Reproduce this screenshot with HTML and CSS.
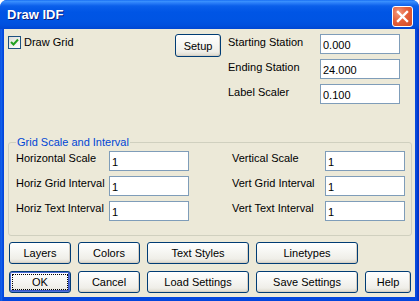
FILE: index.html
```
<!DOCTYPE html>
<html>
<head>
<meta charset="utf-8">
<link rel="stylesheet" href="styles.css">
</head>
<body>
<div class="window">
  <div class="titlebar">
    <span class="title">Draw IDF</span>
    <div class="close">
      <svg width="13" height="13" viewBox="0 0 13 13"><path d="M2 2 L11 11 M11 2 L2 11" stroke="#fff" stroke-width="2.4" stroke-linecap="square"/></svg>
    </div>
  </div>
  <div class="client">
    <div class="top">
      <div class="check-area">
        <span class="checkbox">
          <svg width="11" height="11" viewBox="0 0 11 11"><path d="M2 5 L4.5 7.5 L9 2.5" fill="none" stroke="#21A121" stroke-width="2"/></svg>
        </span>
        <span class="check-label">Draw Grid</span>
      </div>
      <button class="btn setup">Setup</button>
      <div class="fields">
        <span class="lbl">Starting Station</span><input class="txt" value="0.000">
        <span class="lbl">Ending Station</span><input class="txt" value="24.000">
        <span class="lbl">Label Scaler</span><input class="txt" value="0.100">
      </div>
    </div>
    <fieldset class="group">
      <legend>Grid Scale and Interval</legend>
      <div class="cols">
        <div class="gfields">
          <span class="glbl">Horizontal Scale</span><input class="txt" value="1">
          <span class="glbl">Horiz Grid Interval</span><input class="txt" value="1">
          <span class="glbl">Horiz Text Interval</span><input class="txt" value="1">
        </div>
        <div class="gfields">
          <span class="glbl">Vertical Scale</span><input class="txt" value="1">
          <span class="glbl">Vert Grid Interval</span><input class="txt" value="1">
          <span class="glbl">Vert Text Interval</span><input class="txt" value="1">
        </div>
      </div>
    </fieldset>
    <div class="btnrow first">
      <button class="btn w62">Layers</button>
      <button class="btn w62">Colors</button>
      <button class="btn w102">Text Styles</button>
      <button class="btn w102">Linetypes</button>
    </div>
    <div class="btnrow">
      <button class="btn w62 default">OK</button>
      <button class="btn w62">Cancel</button>
      <button class="btn w102">Load Settings</button>
      <button class="btn w102">Save Settings</button>
      <button class="btn w46">Help</button>
    </div>
  </div>
</div>
</body>
</html>
```
FILE: styles.css
```
html, body {
  margin: 0;
  padding: 0;
  background: #ffffff;
}
body {
  font-family: "Liberation Sans", Arial, sans-serif;
  font-size: 11px;
  color: #000;
}
.window {
  width: 419px;
  height: 301px;
  box-sizing: border-box;
  display: flex;
  flex-direction: column;
  background: linear-gradient(90deg, #0842D9 0px, #166AEE 1px, #0A56E6 2px, #0346DC 3px, #0346DC 415px, #0A4DE0 416px, #0035C8 418px);
  border-radius: 7px 7px 0 0;
  padding: 0 4px 4px 4px;
}
.titlebar {
  height: 29px;
  flex: none;
  display: flex;
  align-items: center;
  justify-content: space-between;
  margin: 0 -4px;
  padding: 0 6px 0 7px;
  border-radius: 7px 7px 0 0;
  background: linear-gradient(180deg, #0A5FEE 0px, #3D95FF 1px, #2A7EF8 3px, #0A5FEA 6px, #0055E5 12px, #0054E3 20px, #0050DE 25px, #0046D2 29px);
}
.title {
  color: #fff;
  font-family: "Liberation Sans", Arial, sans-serif;
  font-weight: bold;
  font-size: 13px;
  margin-top: -1px;
  text-shadow: 1px 1px 0 #0A1E80;
}
.close {
  width: 21px;
  height: 21px;
  box-sizing: border-box;
  border: 1px solid #fff;
  border-radius: 3px;
  background: radial-gradient(circle at 30% 30%, #F39A7E 0%, #E5603A 45%, #D24A23 100%);
  display: flex;
  align-items: center;
  justify-content: center;
  margin-top: 3px;
}
.client {
  flex: 1;
  background: #ECE9D8;
  padding: 5px 4px 0 4px;
  display: flex;
  flex-direction: column;
}
.top {
  display: flex;
  align-items: flex-start;
}
.check-area {
  width: 167px;
  display: flex;
  align-items: flex-start;
}
.checkbox {
  width: 13px;
  height: 13px;
  box-sizing: border-box;
  border: 1px solid #1C5180;
  background: linear-gradient(135deg, #DCDCD7, #FFFFFF);
  margin-top: 2px;
  display: flex;
  align-items: center;
  justify-content: center;
}
.check-label {
  margin-left: 3px;
  line-height: 14px;
  margin-top: 1px;
}
.btn {
  font-family: "Liberation Sans", Arial, sans-serif;
  font-size: 11px;
  color: #000;
  height: 22px;
  padding: 0;
  box-sizing: border-box;
  border: 1px solid #003C74;
  border-radius: 3px;
  background: linear-gradient(180deg, #FFFFFF 0%, #F7F7F4 40%, #EFEEE8 80%, #DCD8CC 100%);
  box-shadow: inset -1px -1px 0 #D6D0C5;
}
.setup {
  width: 46px;
  height: 23px;
  margin-right: 7px;
}
.fields {
  display: grid;
  grid-template-columns: 92px 80px;
  row-gap: 5px;
}
.lbl {
  line-height: 14px;
  padding-top: 1px;
}
.txt {
  width: 80px;
  height: 20px;
  box-sizing: border-box;
  border: 1px solid #7F9DB9;
  background: #fff;
  font-family: "Liberation Sans", Arial, sans-serif;
  font-size: 11px;
  color: #000;
  padding: 2px 0 0 2px;
  margin: 0;
  outline: none;
}
.group {
  margin: 31px 0 0 0;
  width: 404px;
  box-sizing: border-box;
  border: 1px solid #D0D0BF;
  border-radius: 3px;
  padding: 2px 6px 14px 7px;
}
.group legend {
  color: #0046D5;
  padding: 0 1px;
  line-height: 14px;
}
.cols {
  display: flex;
  gap: 43px;
}
.gfields {
  display: grid;
  grid-template-columns: 93px 80px;
  row-gap: 5px;
}
.glbl {
  line-height: 12px;
  padding-top: 1px;
}
.btnrow {
  display: flex;
  gap: 7px;
  margin-left: 1px;
  margin-top: 7px;
}
.btnrow.first {
  margin-top: 6px;
}
.w62 { width: 62px; }
.w102 { width: 102px; }
.w46 { width: 46px; }
.default {
  outline: 1px dotted #000;
  outline-offset: -4px;
  box-shadow: inset 0 0 0 1px #4E6FD8, inset -1px -1px 0 1px #3756C5;
}
```
